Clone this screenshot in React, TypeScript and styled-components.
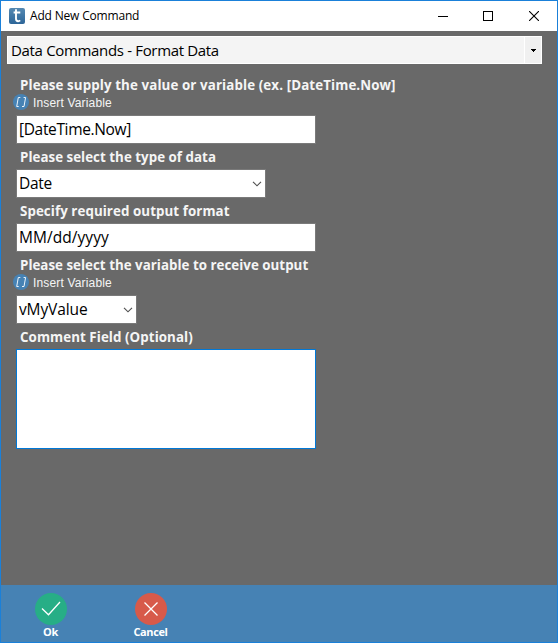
import React from "react";
import styled, { createGlobalStyle } from "styled-components";

const Global = createGlobalStyle`
  * { box-sizing: border-box; }
  body { margin: 0; font-family: "Open Sans", "Noto Sans", sans-serif; }
`;

const Window = styled.div`
  width: 558px;
  height: 643px;
  display: flex;
  flex-direction: column;
  border: 1px solid #1a80d9;
  background: #696969;
  overflow: hidden;
`;

const TitleBar = styled.header`
  height: 30px;
  flex: none;
  display: flex;
  align-items: center;
  padding-left: 8px;
  background: #fff;
`;

const Title = styled.h1`
  flex: 1;
  margin: 0 0 0 5px;
  font-size: 12px;
  font-weight: 400;
  line-height: 28px;
  letter-spacing: -0.18px;
  color: #000;
`;

const WindowButton = styled.button<{ $width?: number }>`
  width: ${(p) => p.$width ?? 45}px;
  height: 30px;
  padding: 0;
  border: 0;
  background: none;
  display: flex;
  align-items: center;
  justify-content: center;
`;

const CommandPicker = styled.div`
  width: 535px;
  height: 28px;
  flex: none;
  margin: 5px 0 0 6px;
  display: flex;
  border: 1px solid #fff;
  background: #f4f4f4;
`;

const PickerText = styled.span<{ $spacing: number; $size?: number }>`
  flex: 1;
  padding-left: 3px;
  font-size: ${(p) => p.$size ?? 15.5}px;
  line-height: 27px;
  letter-spacing: ${(p) => p.$spacing}px;
  white-space: nowrap;
  color: #000;
`;

const PickerArrow = styled.div`
  width: 17px;
  border-left: 1px solid #fff;
  background: #f0f0f0;
  display: flex;
  align-items: center;
  justify-content: center;
`;

const Form = styled.main`
  flex: 1;
  padding: 8px 0 0 15px;
  display: flex;
  flex-direction: column;
  align-items: flex-start;
`;

const Label = styled.label<{ $spacing: number; $short?: boolean }>`
  height: ${(p) => (p.$short ? 21 : 25)}px;
  padding-left: 4px;
  font-size: 13.33px;
  font-weight: 700;
  line-height: 26px;
  letter-spacing: ${(p) => p.$spacing}px;
  white-space: nowrap;
  color: #f5f5f5;
`;

const InsertLink = styled.div`
  height: 22px;
  margin-left: -3px;
  display: flex;
  gap: 4px;
  padding-top: 1px;
  font: 12px/18px "Liberation Sans", Arial, sans-serif;
  letter-spacing: 0.16px;
  color: #f5f5f5;
`;

const Field = styled.div<{ $width: number }>`
  width: ${(p) => p.$width}px;
  height: 29px;
  display: flex;
  align-items: center;
  border: 1px solid #7a7a7a;
  background: #fff;
  padding-right: 3px;
`;

const FieldText = styled(PickerText)`
  padding-left: 2px;
`;

const Comment = styled.textarea`
  width: 300px;
  height: 100px;
  resize: none;
  display: block;
  border: 1px solid #0078d7;
  background: #fff;
  outline: none;
`;

const Footer = styled.footer`
  height: 57px;
  flex: none;
  display: flex;
  padding: 8px 0 0 20px;
  gap: 40px;
  background: #4682b4;
`;

const Action = styled.button`
  width: 60px;
  padding: 0;
  border: 0;
  background: none;
  display: flex;
  flex-direction: column;
  align-items: center;
  font: 700 11px/14px "Open Sans", "Noto Sans", sans-serif;
  color: #fff;
`;

const ActionText = styled.span`
  letter-spacing: -0.4px;
  margin-right: 1px;
`;

const Logo = () => (
  <svg width="16" height="16" viewBox="0 0 16 16">
    <defs>
      <linearGradient id="logo" x1="0" y1="0" x2="0" y2="1">
        <stop offset="0" stopColor="#5589b2" />
        <stop offset="1" stopColor="#2d6598" />
      </linearGradient>
    </defs>
    <rect width="16" height="16" rx="2" fill="url(#logo)" />
    <path d="M7 1.2V10.8Q7 13.2 9.2 13.2Q10.3 13.2 11.2 12.4M4.6 4.5H11.3" fill="none" stroke="#fff" strokeWidth="1.9" />
  </svg>
);

const Chevron = () => (
  <svg width="10" height="6" viewBox="0 0 10 6">
    <path d="M1 .8L5 4.8L9 .8" fill="none" stroke="#505050" strokeWidth="1.15" />
  </svg>
);

const InsertVariable = () => (
  <InsertLink>
    <svg width="16" height="16" viewBox="0 0 16 16">
      <circle cx="8" cy="8" r="8" fill="#4682b4" />
      <path d="M7.3 3.5H5.3L3.7 12.5H5.7M10.6 3.5H12.6L11 12.5H9" fill="none" stroke="#edf4fa" strokeWidth="1" />
    </svg>
    Insert Variable
  </InsertLink>
);

export default function App() {
  return (
    <>
      <Global />
      <Window>
        <TitleBar>
          <Logo />
          <Title>Add New Command</Title>
          <WindowButton aria-label="Minimize">
            <svg width="10" height="10"><path d="M0 5.5H10" stroke="#000" /></svg>
          </WindowButton>
          <WindowButton aria-label="Maximize">
            <svg width="10" height="10"><rect x=".5" y=".5" width="9" height="9" fill="none" stroke="#000" /></svg>
          </WindowButton>
          <WindowButton aria-label="Close" $width={47}>
            <svg width="10" height="10"><path d="M0 0L10 10M10 0L0 10" stroke="#000" strokeWidth="1.1" /></svg>
          </WindowButton>
        </TitleBar>
        <CommandPicker>
          <PickerText $size={15} $spacing={-0.33}>Data Commands - Format Data</PickerText>
          <PickerArrow>
            <svg width="5" height="3"><path d="M0 0H5V1H4V2H3V3H2V2H1V1H0Z" fill="#000" /></svg>
          </PickerArrow>
        </CommandPicker>
        <Form>
          <Label $short $spacing={0.11}>Please supply the value or variable (ex. [DateTime.Now]</Label>
          <InsertVariable />
          <Field $width={300}><FieldText $spacing={-0.35}>[DateTime.Now]</FieldText></Field>
          <Label $spacing={0.03}>Please select the type of data</Label>
          <Field $width={250}><FieldText $spacing={-0.3}>Date</FieldText><Chevron /></Field>
          <Label $spacing={0.07}>Specify required output format</Label>
          <Field $width={300}><FieldText $spacing={0.05}>MM/dd/yyyy</FieldText></Field>
          <Label $short $spacing={0.02}>Please select the variable to receive output</Label>
          <InsertVariable />
          <Field $width={121}><FieldText $spacing={-0.12}>vMyValue</FieldText><Chevron /></Field>
          <Label $spacing={0.07}>Comment Field (Optional)</Label>
          <Comment />
        </Form>
        <Footer>
          <Action>
            <svg width="32" height="32" viewBox="0 0 32 32">
              <circle cx="16" cy="16" r="16" fill="#27ae86" />
              <path d="M7 15.5L13.5 21.7L25 9" fill="none" stroke="#fff" strokeWidth="1.3" />
            </svg>
            <ActionText>Ok</ActionText>
          </Action>
          <Action>
            <svg width="32" height="32" viewBox="0 0 32 32">
              <circle cx="16" cy="16" r="16" fill="#d75a4a" />
              <path d="M9.5 9.5L22.5 22.5M22.5 9.5L9.5 22.5" fill="none" stroke="#fff" strokeWidth="1.3" />
            </svg>
            <ActionText>Cancel</ActionText>
          </Action>
        </Footer>
      </Window>
    </>
  );
}
